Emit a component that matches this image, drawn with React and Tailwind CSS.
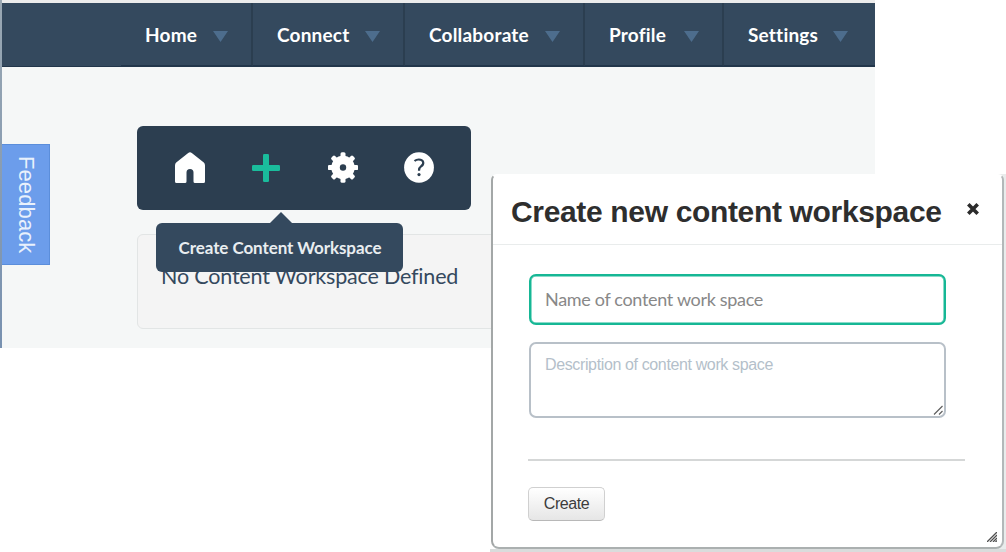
import React from "react";

function NavItem({ label, width, last }) {
  return (
    <li
      className={`flex h-full items-center justify-between pl-6 pt-[3px] text-[19px] font-bold tracking-[0.2px] text-white border-b border-b-[#22364b] ${width} ${
        last ? "pr-[27px]" : "pr-[23px] border-r-2 border-r-[#2b3e50]"
      }`}
    >
      <a href="#" className="whitespace-nowrap">{label}</a>
      <svg className="mt-px shrink-0" width="15" height="11" viewBox="0 0 15 11">
        <path d="M0 0h15L7.5 11z" fill="#4d6d8d" />
      </svg>
    </li>
  );
}

function HomeIcon() {
  return (
    <svg width="30" height="31" viewBox="0 0 30 31" fill="#fff">
      <path d="M13.200 1Q15 -.5 16.800 1L28.800 10.500Q30 11.500 30 13.500V29.500Q30 31 28.500 31H20Q18.500 31 18.500 29.500V20.500Q18.500 17 15 17T11.500 20.500V29.500Q11.500 31 10 31H1.500Q0 31 0 29.500V13.500Q0 11.500 1.200 10.500Z" />
    </svg>
  );
}

function PlusIcon() {
  return (
    <svg width="28" height="28" viewBox="0 0 28 28" fill="#1abc9c">
      <rect x="11" y="0" width="6" height="28" rx="1.200" />
      <rect x="0" y="11" width="28" height="6" rx="1.200" />
    </svg>
  );
}

function GearIcon() {
  const angles = [0, 45, 90, 135, 180, 225, 270, 315];
  return (
    <svg width="30" height="31" viewBox="-15 -15.500 30 31">
      <g fill="#fff">
        <circle r="11.700" />
        {angles.map((a) => (
          <rect key={a} x="-2.500" y="-15.200" width="5" height="7" rx="1.500" transform={`rotate(${a})`} />
        ))}
      </g>
      <circle r="3.200" fill="#2c3e50" />
    </svg>
  );
}

function HelpIcon() {
  return (
    <svg width="30" height="31" viewBox="0 0 30 31">
      <ellipse cx="15" cy="15.500" rx="14.900" ry="15.300" fill="#fff" />
      <path d="M10.500 9Q12.300 7.500 14.800 7.500C20.300 7.500 20.200 12.300 17.200 14.200Q15 15.700 15 18.800" fill="none" stroke="#2c3e50" strokeWidth="2.200" />
      <circle cx="15" cy="22.600" r="1.600" fill="#2c3e50" />
    </svg>
  );
}

function Toolbar() {
  return (
    <div className="flex h-[84px] w-[334px] items-center rounded-md bg-[#2c3e50] pb-0.5 pl-[38px]">
      <span className="w-[77px]"><HomeIcon /></span>
      <span className="w-[76px] pt-0.5"><PlusIcon /></span>
      <span className="w-[76px]"><GearIcon /></span>
      <HelpIcon />
    </div>
  );
}

function Tooltip() {
  return (
    <div className="absolute -top-[23px] left-[18px] flex w-[247px] flex-col">
      <svg className="ml-[114px]" width="22" height="11" viewBox="0 0 22 11">
        <path d="M0 11L11 0L22 11z" fill="#34495e" />
      </svg>
      <div className="flex h-[49px] items-center justify-center rounded-md bg-[#34495e] pl-px pt-px text-[17px] font-bold tracking-[-0.08px] text-[#e9edf0]">
        <span className="whitespace-nowrap">Create Content Workspace</span>
      </div>
    </div>
  );
}

function Dialog() {
  return (
    <div className="absolute left-[491px] top-[174px] flex h-[378px] w-[515px] flex-col">
      <div className="flex h-[375px] bg-[linear-gradient(to_right,transparent_50%,#e9ecec_50%)]">
        <section className="flex w-[513px] flex-col rounded-b-lg rounded-t-md border-2 border-l-[#a3a7a7] border-r-[#b3b8b9] border-b-[#abb0b0] border-t-white bg-white font-['Liberation_Sans',sans-serif]">
          <header className="flex h-[69px] items-center border-b border-[#e9ecec] pl-[18px]">
            <h1 className="w-[456px] whitespace-nowrap pt-0.5 text-[30px] font-bold tracking-[-0.34px] text-[#2e2e2e]">Create new content workspace</h1>
            <svg className="-mt-0.5" width="12" height="12" viewBox="0 0 12 12" stroke="#2b2b2b" strokeWidth="3.600">
              <path d="M1.300 1.300L10.700 10.700M10.700 1.300L1.300 10.700" />
            </svg>
          </header>
          <form className="flex flex-col items-start pl-9 pt-[29px]">
            <div className="flex h-[51px] w-[417px] items-center rounded-[7px] border-2 border-[#16b795] pl-[14px] font-['Lato',sans-serif] text-[18px] tracking-[-0.32px] text-[#888] shadow-[inset_0_0_0_0.5px_#16b795]">
              <span className="whitespace-nowrap">Name of content work space</span>
            </div>
            <div className="mt-[17px] flex h-[76px] w-[417px] justify-between rounded-[7px] border-2 border-[#b8c0c8] pl-[14px] pt-[11px] text-base leading-5 tracking-[-0.37px] text-[#b4bfca]">
              <span className="whitespace-nowrap">Description of content work space</span>
              <svg className="mb-px mr-px self-end" width="10" height="10" viewBox="0 0 10 10" stroke="#606060" strokeWidth="1.200">
                <path d="M1 9.500L9.500 1M6 9.500L9.500 6" />
              </svg>
            </div>
            <hr className="-ml-px mt-[41px] w-[437px] border-0 border-t-2 border-[#d5d7d7]" />
            <button type="button" className="-ml-px mt-[26px] h-[34px] w-[77px] rounded-[5px] border border-[#d0d0d0] border-b-[#b8b8b8] bg-gradient-to-b from-white to-[#e6e6e6] text-base tracking-[-0.45px] text-[#3c3c3c]">Create</button>
          </form>
          <svg className="mb-[5px] mr-[5px] mt-auto self-end" width="10" height="10" viewBox="0 0 10 10" stroke="#505050" strokeWidth="1.300">
            <path d="M0 10L10 0M3 10L10 3M6 10L10 6M8.500 10L10 8.500" />
          </svg>
        </section>
      </div>
      <div className="-ml-px h-[3px] bg-[#d9dcdc]" />
    </div>
  );
}

export default function App() {
  return (
    <div className="relative h-[552px] w-[1006px] overflow-hidden bg-white font-['Lato',sans-serif] [font-variant-ligatures:none]">
      <main className="flex h-[348px] w-[875px] bg-[#f5f7f7]">
        <div className="w-0.5 shrink-0 bg-gradient-to-b from-[#9aa8b3] to-[#7891b0]" />
        <div className="min-w-0 flex-1">
          <div className="h-[3px] bg-[#ececec]" />
          <nav className="h-16 border-b border-[#22364b] bg-[#34495e]">
            <ul className="flex h-full pl-[119px]">
              <NavItem label="Home" width="w-[132px]" />
              <NavItem label="Connect" width="w-[152px]" />
              <NavItem label="Collaborate" width="w-[180px]" />
              <NavItem label="Profile" width="w-[139px]" />
              <NavItem label="Settings" width="w-[151px]" last />
            </ul>
          </nav>
          <div className="flex pt-[59px]">
            <aside className="w-[135px] shrink-0 pt-[18px]">
              <div className="flex h-[121px] w-12 items-center justify-center border border-l-0 border-[#5b8edb] bg-[#6c9deb] pl-0.5 font-['Liberation_Sans',sans-serif] text-[22px] tracking-[0.1px] text-[#e9f1fc] [writing-mode:vertical-rl]">
                <span className="whitespace-nowrap">Feedback</span>
              </div>
            </aside>
            <div className="flex-1">
              <Toolbar />
              <div className="relative mt-6 h-[95px] rounded-md border border-[#e2e5e5] bg-[#f4f4f4] pl-[23px] pt-[27px] text-[21.500px] leading-7 tracking-[-0.18px] text-[#34495e]">
                <p className="whitespace-nowrap">No Content Workspace Defined</p>
                <Tooltip />
              </div>
            </div>
          </div>
        </div>
      </main>
      <Dialog />
    </div>
  );
}
